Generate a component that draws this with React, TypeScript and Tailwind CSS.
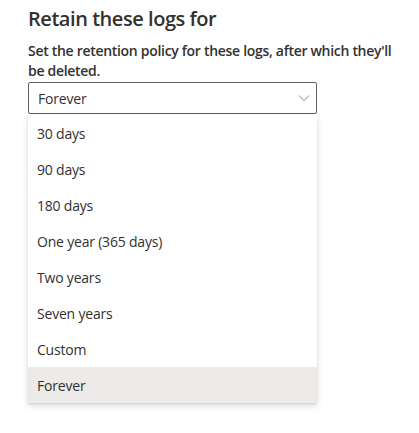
import React from "react";

const options = [
  "30 days",
  "90 days",
  "180 days",
  "One year (365 days)",
  "Two years",
  "Seven years",
  "Custom",
  "Forever",
];

const RetentionDropdown = () => {
  const selected = "Forever";
  return (
    <div className="w-[289px]">
      {/* Closed field */}
      <div className="h-8 flex items-center justify-between border border-[#605e5c] rounded-[2px] pl-[9px] pr-[4px] bg-white">
        <span className="text-[14px] text-[#323130] tracking-[-0.2px]">{selected}</span>
        <svg width="12" height="8" viewBox="0 0 12 8" className="mr-[2px]">
          <path d="M1 1.5 L6 6.5 L11 1.5" fill="none" stroke="#8a8886" strokeWidth="1" />
        </svg>
      </div>

      {/* Open list */}
      <div className="mt-px bg-white shadow-[0_3px_7px_rgba(0,0,0,0.13),0_1px_2px_rgba(0,0,0,0.1)]">
        {options.map((o) => (
          <div
            key={o}
            className={
              "h-9 flex items-center px-[9px] text-[14px] text-[#323130] tracking-[-0.2px] " +
              (o === selected ? "bg-[#edebe9]" : "")
            }
          >
            {o}
          </div>
        ))}
      </div>
    </div>
  );
};

export default function App() {
  return (
    <div
      className="w-[419px] h-[433px] bg-white pl-[28px] pt-[5px]"
      style={{ fontFamily: '"Open Sans", "Noto Sans", sans-serif' }}
    >
      <h2 className="text-[20px] font-semibold text-[#323130] leading-[28px] tracking-[-0.45px]">
        Retain these logs for
      </h2>
      <p className="mt-[8px] max-w-[374px] text-[14px] font-semibold text-[#323130] leading-[20px] tracking-[-0.3px]">
        Set the retention policy for these logs, after which they'll be deleted.
      </p>
      <div className="mt-px">
        <RetentionDropdown />
      </div>
    </div>
  );
}
